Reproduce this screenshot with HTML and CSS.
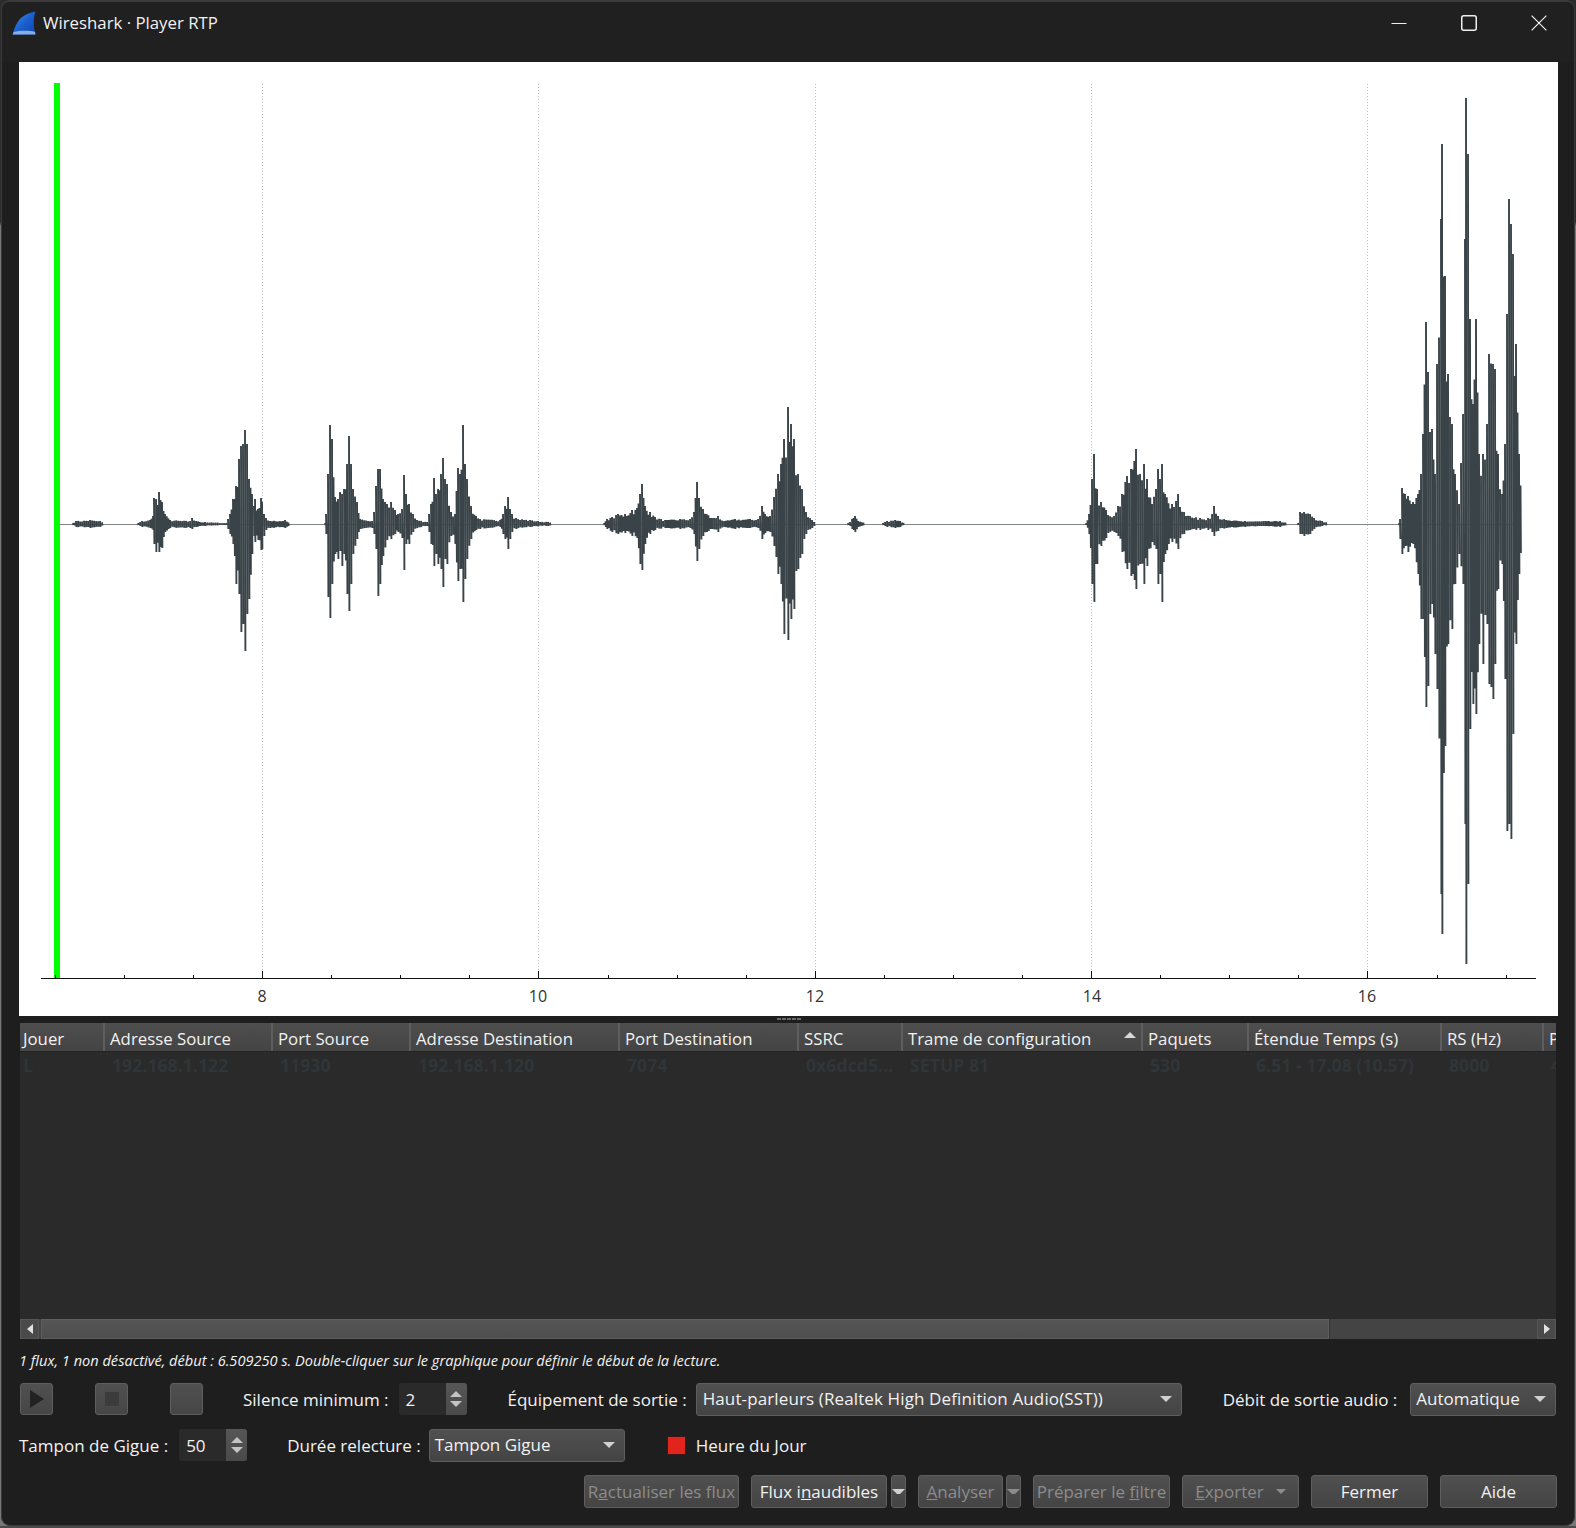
FILE: index.html
```html
<!DOCTYPE html>
<html lang="fr">
<head>
    <meta charset="UTF-8">
    <title>Wireshark · Player RTP</title>
    <link rel="stylesheet" href="styles.css">
    <script src="script.js" defer></script>
</head>
<body>
<div class="window">
    <!-- Title bar -->
    <div class="titlebar">
        <svg class="logo" viewBox="0 0 24 24" width="24" height="24">
            <defs>
                <linearGradient id="fin" x1="0" y1="0" x2="1" y2="1">
                    <stop offset="0" stop-color="#4a97f0"/>
                    <stop offset="0.5" stop-color="#1a5fd0"/>
                    <stop offset="1" stop-color="#0f46a8"/>
                </linearGradient>
            </defs>
            <path d="M0.5 23.5 C2.5 17 5 10.5 9.5 6.5 C13 3.4 18 1.4 23.5 0.5 C21.5 6 21 14 23.5 23.5 Z" fill="url(#fin)"/>
            <path d="M0.5 23.5 C1 22.5 1.3 21.8 1.6 21 C8 19.5 17 19.5 23 20.8 L23.5 23.5 Z" fill="#86aee4"/>
        </svg>
        <span class="title">Wireshark · Player RTP</span>
        <div class="winctrls">
            <svg width="16" height="16" viewBox="0 0 16 16"><path d="M0.5 8.5H15.5" stroke="#f0f0f0" stroke-width="1" fill="none"/></svg>
            <svg width="16" height="16" viewBox="0 0 16 16"><rect x="0.75" y="0.75" width="14.5" height="14.5" rx="2" stroke="#f0f0f0" stroke-width="1.5" fill="none"/></svg>
            <svg width="16" height="16" viewBox="0 0 16 16"><path d="M0.6 0.6L15.4 15.4M15.4 0.6L0.6 15.4" stroke="#f0f0f0" stroke-width="1.2" fill="none"/></svg>
        </div>
    </div>

    <div class="content">
        <!-- Waveform plot -->
        <svg id="plot" class="plot" viewBox="19 62 1539 954" width="1539" height="954">
            <path class="grid" d="M262.5 84V971M538.5 84V971M815.5 84V971M1091.5 84V971M1367.5 84V971"/>
            <path class="baseline" d="M60 524.5H1515"/>
            <g id="wave"></g>
            <rect x="54" y="83" width="6" height="895" fill="#00ff00"/>
            <path class="axis" d="M41 978.5H1536"/>
            <path id="ticks" class="axis"/>
            <text class="tick" x="262" y="1002">8</text>
            <text class="tick" x="538" y="1002">10</text>
            <text class="tick" x="815" y="1002">12</text>
            <text class="tick" x="1092" y="1002">14</text>
            <text class="tick" x="1367" y="1002">16</text>
        </svg>

        <div class="sash"><span></span><span></span><span></span><span></span><span></span></div>

        <!-- Streams table -->
        <div class="table">
            <div class="thead">
                <div class="th c1">Jouer</div>
                <div class="th c2">Adresse Source</div>
                <div class="th c3">Port Source</div>
                <div class="th c4">Adresse Destination</div>
                <div class="th c5">Port Destination</div>
                <div class="th c6">SSRC</div>
                <div class="th c7">Trame de configuration<i class="sort"></i></div>
                <div class="th c8">Paquets</div>
                <div class="th c9">Étendue Temps (s)</div>
                <div class="th c10">RS (Hz)</div>
                <div class="th c11">P</div>
            </div>
            <div class="tbody">
                <div class="row">
                    <div class="td c1">L</div>
                    <div class="td c2">192.168.1.122</div>
                    <div class="td c3">11930</div>
                    <div class="td c4">192.168.1.120</div>
                    <div class="td c5">7074</div>
                    <div class="td c6">0x6dcd5…</div>
                    <div class="td c7">SETUP 81</div>
                    <div class="td c8">530</div>
                    <div class="td c9">6.51 - 17.08 (10.57)</div>
                    <div class="td c10">8000</div>
                    <div class="td c11">4</div>
                </div>
            </div>
            <div class="hscroll">
                <div class="sbtn"><i class="arrow-left"></i></div>
                <div class="handle"></div>
                <div class="track"></div>
                <div class="sbtn"><i class="arrow-right"></i></div>
            </div>
        </div>

        <div class="status">1 flux, 1 non désactivé, début : 6.509250 s. Double-cliquer sur le graphique pour définir le début de la lecture.</div>

        <!-- Controls -->
        <div class="ctrl-row first">
            <button class="tool"><i class="play"></i></button>
            <button class="tool"><i class="stop"></i></button>
            <button class="tool"></button>
            <span class="label l-silence">Silence minimum :</span>
            <div class="spin"><span>2</span><div class="spin-btns"><i class="up"></i><i class="down"></i></div></div>
            <span class="label l-device">Équipement de sortie :</span>
            <div class="combo c-device">Haut-parleurs (Realtek High Definition Audio(SST))<i class="down"></i></div>
            <span class="label l-rate">Débit de sortie audio :</span>
            <div class="combo c-rate">Automatique<i class="down"></i></div>
        </div>
        <div class="ctrl-row second">
            <span class="label l-jitter">Tampon de Gigue :</span>
            <div class="spin"><span>50</span><div class="spin-btns"><i class="up"></i><i class="down"></i></div></div>
            <span class="label l-replay">Durée relecture :</span>
            <div class="combo c-replay">Tampon Gigue<i class="down"></i></div>
            <i class="redbox"></i>
            <span class="label">Heure du Jour</span>
        </div>
        <div class="buttons">
            <button class="btn off b-refresh">R<u>a</u>ctualiser les flux</button>
            <button class="btn b-inaud">Flux i<u>n</u>audibles</button>
            <button class="btn drop drop-a"><i class="down"></i></button>
            <button class="btn off b-analyse"><u>A</u>nalyser</button>
            <button class="btn off drop drop-b"><i class="down"></i></button>
            <button class="btn off b-filter">Préparer le <u>f</u>iltre</button>
            <button class="btn off b-export"><u>E</u>xporter<i class="down"></i></button>
            <button class="btn b-main">Fermer</button>
            <button class="btn b-main">Aide</button>
        </div>
    </div>
</div>
</body>
</html>
```

FILE: styles.css
```css
* {
    box-sizing: border-box;
}

body {
    margin: 0;
    width: 1576px;
    height: 1528px;
    overflow: hidden;
    background: linear-gradient(#2c2c2c 222px, #777 226px, #777 1526px, #4a4a4a 1526px);
    font-family: "Open Sans", sans-serif;
    font-size: 17px;
    color: #f2f2f2;
}

.window {
    width: 1574px;
    height: 1526px;
    margin-left: 1px;
    border: 1px solid #3a3a3c;
    border-top-width: 2px;
    border-radius: 9px;
    background-color: #1e1e1e;
    overflow: hidden;
}

/* Title bar */
.titlebar {
    display: flex;
    align-items: center;
    height: 60px;
    padding: 0 27px 19px 10px;
    background-color: #202020;
}

.logo {
    flex: none;
}

.title {
    margin-left: 7px;
    font-size: 16.8px;
}

.winctrls {
    display: flex;
    gap: 54px;
    margin-left: auto;
}

.content {
    padding: 0 16px 0 17px;
}

.plot {
    display: block;
    background-color: #fff;
}

.grid {
    fill: none;
    stroke: #bdbdbd;
    stroke-width: 1;
    stroke-dasharray: 1 2;
}

.axis {
    fill: none;
    stroke: #111;
    stroke-width: 1;
}

.tick {
    font-size: 16px;
    fill: #333;
    text-anchor: middle;
}

.baseline {
    fill: none;
    stroke: #808585;
    stroke-width: 1;
}

.wave-line {
    fill: none;
    stroke: #3a4448;
    stroke-width: 1.9;
}

.sash {
    display: flex;
    justify-content: center;
    gap: 1px;
    height: 7px;
    padding-top: 2px;
}

.sash span {
    width: 4px;
    height: 2px;
    background-color: #6a6a6a;
}

/* Table */
.table {
    width: 1536px;
    height: 316px;
    margin-left: 1px;
    display: flex;
    flex-direction: column;
    background-color: #2a2a2a;
}

.thead,
.row {
    display: grid;
    grid-template-columns: 85px 168px 138px 209px 179px 104px 240px 106px 193px 102px 12px;
}

.thead {
    height: 29px;
    border-bottom: 1px solid #222;
    background: linear-gradient(#4e4e4e, #444);
}

.th {
    position: relative;
    padding: 0 0 0 3px;
    line-height: 31px;
    white-space: nowrap;
    overflow: hidden;
    border-right: 2px solid #5e5e5e;
    font-size: 16.8px;
}

.th.c1 {
    padding-left: 3px;
}

.th:not(.c1) {
    padding-left: 5px;
}

.th.c11 {
    border-right: 0;
}

.sort {
    position: absolute;
    right: 5px;
    top: 9px;
    border-left: 6px solid transparent;
    border-right: 6px solid transparent;
    border-bottom: 6px solid #d8d8d8;
}

.tbody {
    flex: 1;
}

.row {
    height: 27px;
    color: #303538;
    font-size: 17.7px;
    font-weight: 700;
}

.td {
    padding-left: 7px;
    line-height: 26px;
    white-space: nowrap;
    overflow: hidden;
}

.td.c1 {
    padding-left: 3px;
}

.hscroll {
    display: flex;
    height: 20px;
    background-color: #444;
}

.sbtn {
    display: flex;
    align-items: center;
    justify-content: center;
    width: 19px;
    background-color: #4a4a4a;
    border: 1px solid #555;
}

.handle {
    width: 1288px;
    margin-left: 2px;
    background: linear-gradient(#555, #4e4e4e);
    border: 1px solid #5e5e5e;
}

.track {
    flex: 1;
    border-left: 1px solid #333;
}

.arrow-left {
    border-top: 5px solid transparent;
    border-bottom: 5px solid transparent;
    border-right: 6px solid #e0e0e0;
}

.arrow-right {
    border-top: 5px solid transparent;
    border-bottom: 5px solid transparent;
    border-left: 6px solid #e0e0e0;
}

.status {
    height: 44px;
    padding-left: 0;
    line-height: 42px;
    font-size: 14.58px;
    font-style: italic;
}

/* Controls */
.ctrl-row {
    display: flex;
    align-items: center;
    height: 32px;
    padding-left: 1px;
}

.second {
    margin-top: 14px;
    padding-left: 0;
}

.tool {
    width: 33px;
    height: 32px;
    margin-right: 42px;
    padding: 0;
    display: flex;
    align-items: center;
    justify-content: center;
    background: linear-gradient(#505050, #464646);
    border: 1px solid #5e5e5e;
    border-radius: 3px;
}

.tool:nth-child(3) {
    margin-right: 40px;
}

.play {
    border-top: 9px solid transparent;
    border-bottom: 9px solid transparent;
    border-left: 14px solid #222;
}

.stop {
    width: 14px;
    height: 14px;
    background-color: #3c3c3c;
}

.label {
    white-space: nowrap;
}

.spin {
    display: flex;
    width: 68px;
    height: 32px;
    margin-left: 10px;
    background-color: #2a2a2a;
    border-radius: 3px;
    overflow: hidden;
}

.spin span {
    flex: 1;
    padding: 1px 0 0 7px;
    line-height: 32px;
}

.spin-btns {
    width: 21px;
    display: flex;
    flex-direction: column;
    align-items: center;
    justify-content: center;
    gap: 4px;
    background: linear-gradient(#565656, #4a4a4a);
}

.spin-btns .up {
    border-left: 6px solid transparent;
    border-right: 6px solid transparent;
    border-bottom: 6px solid #c4c4c4;
}

.spin-btns .down {
    border-top-color: #c4c4c4;
}

.combo {
    position: relative;
    flex: none;
    height: 33px;
    padding-left: 5px;
    line-height: 29px;
    background: linear-gradient(#505050, #444);
    border: 1px solid #5e5e5e;
    border-radius: 3px;
    white-space: nowrap;
}

.down {
    display: block;
    border-left: 6px solid transparent;
    border-right: 6px solid transparent;
    border-top: 6px solid #d0d0d0;
}

.combo .down {
    position: absolute;
    right: 9px;
    top: 12px;
}

.l-device {
    margin-left: 41px;
}

.c-device {
    width: 486px;
    margin-left: 9px;
    padding-left: 6px;
    letter-spacing: 0.12px;
}

.l-rate {
    margin-left: 41px;
}

.c-rate {
    width: 146px;
    margin-left: 13px;
}

.l-jitter {
    margin-right: 1px;
}

.l-replay {
    margin-left: 40px;
}

.c-replay {
    width: 196px;
    margin-left: 8px;
}

.redbox {
    width: 19px;
    height: 19px;
    margin: 0 10px 0 42px;
    background-color: #e3241c;
    border: 1px solid #3a1a18;
}

.buttons {
    display: flex;
    justify-content: flex-end;
    gap: 12px;
    margin-top: 14px;
    margin-right: 1px;
}

.btn {
    position: relative;
    height: 33px;
    padding: 0;
    background: linear-gradient(#505050, #444);
    border: 1px solid #5e5e5e;
    border-radius: 3px;
    color: #f2f2f2;
    font-family: inherit;
    font-size: 17px;
    white-space: nowrap;
}

.btn.off {
    color: #8c8c8c;
}

.btn.drop {
    width: 15px;
}

.drop-a {
    margin-left: -8px;
}

.drop-b {
    margin-left: -9px;
}

.btn.drop .down {
    border-left-width: 5px;
    border-right-width: 5px;
    border-top-width: 5px;
    margin: 0 auto;
}

.btn.off .down {
    border-top-color: #8c8c8c;
}

.b-refresh {
    width: 155px;
}

.b-inaud {
    width: 136px;
}

.b-analyse {
    width: 85px;
}

.b-filter {
    width: 137px;
}

.b-export {
    width: 117px;
    padding-right: 22px;
}

.b-export .down {
    position: absolute;
    right: 12px;
    top: 13px;
    border-left-width: 5px;
    border-right-width: 5px;
    border-top-width: 5px;
}

.b-main {
    width: 117px;
}
```

FILE: script.js
```js
// x (page px), height above the centre line, depth below it
var envelope = [
    [60,1,1],[63,1,5],[66,1,1],[73,1,1],[76,3,3],[90,4,4],[100,3,3],[104,1,1],[138,1,1],[142,3,3],[150,4,4],
    [153,8,6],[154,26,20],[156,25,28],[159,32,28],[162,22,24],[165,10,8],[170,4,4],[190,3,4],[192,6,5],[196,3,3],[205,2,2],[226,1,1],
    [228,5,5],[230,10,10],[233,25,20],[236,38,60],[239,65,70],[241,78,108],[243,80,100],[245,94,127],[247,80,90],[249,45,75],[252,30,30],
    [254,18,12],[255,25,18],[258,15,16],[261,26,26],[262,22,25],[264,10,12],[266,6,6],[270,3,4],[285,4,4],[290,1,2],[325,1,1],
    [326,10,10],[328,50,73],[330,99,94],[332,85,60],[335,27,30],[338,25,35],[340,32,27],[342,30,42],[344,35,30],[347,60,70],[349,88,87],
    [351,60,60],[353,35,30],[357,22,15],[360,5,5],[372,3,4],[374,12,10],[376,38,25],[378,55,72],[380,55,60],[383,25,32],[387,20,16],[391,22,15],
    [395,14,10],[398,10,8],[402,15,14],[404,49,46],[406,30,20],[409,20,20],[413,10,8],[417,4,4],[427,2,2],[429,10,8],[431,20,20],[434,46,42],
    [436,30,30],[438,35,40],[441,50,45],[443,66,63],[445,45,35],[447,40,40],[451,12,12],[455,10,20],[458,56,57],[460,50,45],[463,99,78],[465,60,55],
    [467,45,35],[471,18,15],[476,8,6],[480,5,5],[500,4,3],[503,10,10],[505,18,15],[508,27,25],[510,15,15],[512,10,8],[516,6,5],[530,4,3],[548,2,2],
    [552,1,1],[604,1,1],[607,5,5],[612,7,8],[618,10,10],[625,10,9],[632,14,12],[637,16,14],[640,30,40],[642,40,46],[645,18,20],[650,12,10],[655,7,6],
    [665,4,4],[680,5,5],[690,5,4],[694,12,10],[697,42,37],[699,26,25],[703,15,12],[712,6,5],[718,8,8],[724,3,3],[735,5,5],[750,5,4],[758,5,4],
    [762,18,15],[765,10,9],[770,8,8],[774,27,22],[778,50,50],[781,60,60],[784,85,110],[788,117,116],[791,100,95],[794,85,85],[798,50,45],[802,35,30],
    [806,12,10],[812,4,4],[816,1,1],[848,1,1],[852,5,5],[855,8,8],[858,3,3],[865,1,1],[883,1,1],[887,3,3],[895,4,4],[900,3,3],[905,1,1],
    [1086,1,1],[1089,10,10],[1092,45,60],[1094,70,78],[1097,35,40],[1101,22,22],[1106,14,14],[1114,8,8],[1118,18,12],[1122,30,28],[1127,48,45],[1131,55,52],
    [1136,75,65],[1140,50,40],[1144,60,60],[1147,45,42],[1152,20,18],[1156,35,25],[1158,55,60],[1160,45,50],[1162,60,78],[1165,30,30],[1172,20,18],
    [1178,30,25],[1184,12,10],[1190,8,6],[1200,6,6],[1208,6,6],[1212,10,8],[1214,18,12],[1218,8,7],[1226,4,4],[1245,3,3],[1265,3,2],[1280,3,3],[1287,1,1],
    [1298,1,1],[1300,12,10],[1304,12,12],[1310,10,10],[1314,6,5],[1322,3,2],[1328,1,1],[1399,1,1],
    [1400,5,15],[1402,36,30],[1405,30,22],[1408,28,28],[1413,22,20],[1418,30,50],[1421,50,95],[1423,90,95],[1426,202,183],[1428,152,162],[1432,95,80],
    [1435,50,130],[1437,160,165],[1441,305,370],[1442,380,410],[1445,248,222],[1448,150,120],[1452,100,105],[1455,50,60],[1459,20,30],[1463,110,60],[1465,285,300],
    [1466,426,440],[1468,370,360],[1470,205,205],[1473,120,180],[1476,205,190],[1479,70,120],[1483,70,140],[1487,100,100],[1489,170,160],[1493,160,175],[1495,155,140],
    [1498,70,65],[1502,30,40],[1505,80,155],[1507,210,307],[1509,325,300],[1511,300,315],[1513,270,210],[1516,180,120],[1519,70,50],[1522,10,10]
];

var centre = 524;
var period = 2.1;
var seed = 7;

function rand() {
    seed = (seed * 16807) % 2147483647;
    return seed / 2147483647;
}

function bar(x, up, down) {
    return "M" + x.toFixed(1) + " " + (centre - up).toFixed(1) +
        "L" + (x + 0.4).toFixed(1) + " " + (centre + down).toFixed(1);
}

// each sample is its own stroke, so the quiet parts leave only the baseline
function buildWave() {
    var d = "";
    for (var i = 0; i < envelope.length - 1; i++) {
        var a = envelope[i];
        var b = envelope[i + 1];
        var span = b[0] - a[0];
        if (a[1] <= 1 && b[1] <= 1) continue;
        d += bar(a[0], a[1], a[2]);
        var fill = Math.ceil(span / period) - 1;
        for (var s = 1; s <= fill; s++) {
            var t = s / (fill + 1);
            var k = 0.65 + rand() * 0.35;
            d += bar(a[0] + span * t, (a[1] + (b[1] - a[1]) * t) * k, (a[2] + (b[2] - a[2]) * t) * k);
        }
    }
    var path = document.createElementNS("http://www.w3.org/2000/svg", "path");
    path.setAttribute("class", "wave-line");
    path.setAttribute("d", d);
    document.getElementById("wave").appendChild(path);
}

function buildTicks() {
    var d = "";
    for (var i = -1; i < 21; i++) {
        var x = Math.floor(124.5 + i * 69.08) + 0.5;
        d += "M" + x + " 978V" + (i % 4 === 2 ? 971 : 975);
    }
    document.getElementById("ticks").setAttribute("d", d);
}

buildWave();
buildTicks();
```
